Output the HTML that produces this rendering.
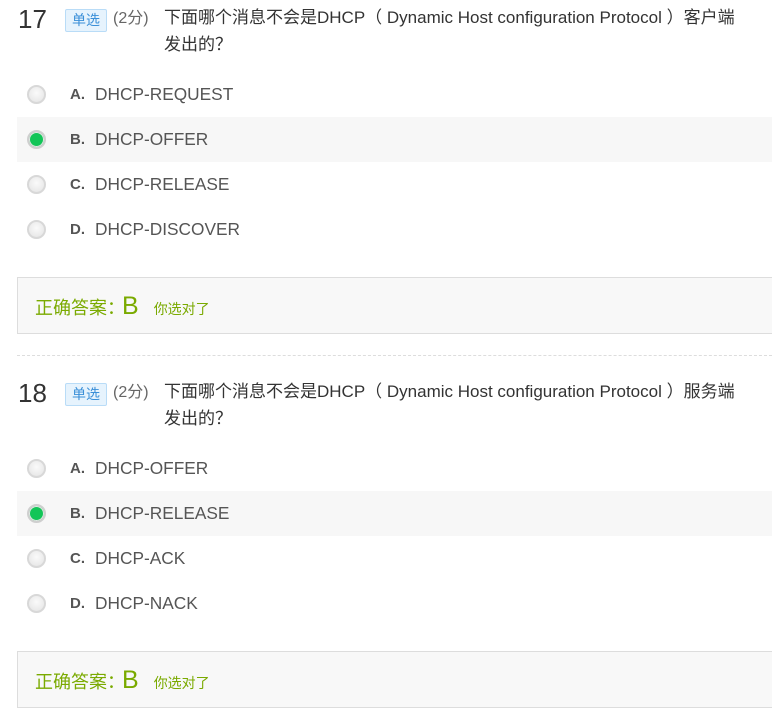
<!DOCTYPE html>
<html><head><meta charset="utf-8"><style>
*{margin:0;padding:0;box-sizing:border-box}
body{width:772px;height:712px;background:#fff;font-family:"Liberation Sans","Noto Sans CJK SC",sans-serif;position:relative;overflow:hidden;color:#333}
.a{position:absolute;white-space:nowrap}
.num{font-size:26px;color:#333;line-height:30px}
.tag{font-size:14px;color:#3a8fd8;background:#e6f3fd;border:1px solid #b9dcf7;border-radius:2px;width:42px;height:23px;line-height:21px;text-align:center}
.sc{font-size:16px;color:#666;line-height:22px}
.q{font-size:17px;color:#333;line-height:27px}
.row{position:absolute;left:17px;width:755px;height:45px}
.row.sel{background:#f7f7f7}
.rd{position:absolute;left:10px;top:13px;width:19px;height:19px;border-radius:50%;border:2px solid #d8d8d8;background:radial-gradient(circle at 50% 40%,#fafafa,#e3e3e3)}
.rd.on{background:#12c557;border-color:#cfcfcf;box-shadow:inset 0 0 0 1px #e8e8e8}
.lb{position:absolute;left:53px;top:0;line-height:45px;font-size:15px;font-weight:bold;color:#555}
.tx{position:absolute;left:78px;top:0;line-height:45px;font-size:17.3px;color:#555}
.ans{position:absolute;left:17px;width:760px;height:57px;background:#f8f8f8;border:1px solid #ddd}
.ans .t{position:absolute;left:17px;top:0;line-height:57px;font-size:18px;color:#7aaa00}
.ans .b{font-size:25px;margin:0 15px 0 -3px}
.ans .s{font-size:14px}
.dash{position:absolute;left:17px;top:355px;width:755px;border-top:1px dashed #ddd}
</style></head><body>
<div class="a num" style="left:18px;top:4px">17</div>
<div class="a tag" style="left:65px;top:9px">单选</div>
<div class="a sc" style="left:113px;top:8px">(2分)</div>
<div class="a q" style="left:164px;top:4px">下面哪个消息不会是DHCP（ Dynamic Host configuration Protocol ）客户端<br>发出的？</div>
<div class="row" style="top:72px"><div class="rd"></div><div class="lb">A.</div><div class="tx">DHCP-REQUEST</div></div>
<div class="row sel" style="top:117px"><div class="rd on"></div><div class="lb">B.</div><div class="tx">DHCP-OFFER</div></div>
<div class="row" style="top:162px"><div class="rd"></div><div class="lb">C.</div><div class="tx">DHCP-RELEASE</div></div>
<div class="row" style="top:207px"><div class="rd"></div><div class="lb">D.</div><div class="tx">DHCP-DISCOVER</div></div>
<div class="ans" style="top:277px"><div class="t">正确答案：<span class="b">B</span><span class="s">你选对了</span></div></div>
<div class="dash"></div>

<div class="a num" style="left:18px;top:378px">18</div>
<div class="a tag" style="left:65px;top:383px">单选</div>
<div class="a sc" style="left:113px;top:382px">(2分)</div>
<div class="a q" style="left:164px;top:378px">下面哪个消息不会是DHCP（ Dynamic Host configuration Protocol ）服务端<br>发出的？</div>
<div class="row" style="top:446px"><div class="rd"></div><div class="lb">A.</div><div class="tx">DHCP-OFFER</div></div>
<div class="row sel" style="top:491px"><div class="rd on"></div><div class="lb">B.</div><div class="tx">DHCP-RELEASE</div></div>
<div class="row" style="top:536px"><div class="rd"></div><div class="lb">C.</div><div class="tx">DHCP-ACK</div></div>
<div class="row" style="top:581px"><div class="rd"></div><div class="lb">D.</div><div class="tx">DHCP-NACK</div></div>
<div class="ans" style="top:651px"><div class="t">正确答案：<span class="b">B</span><span class="s">你选对了</span></div></div>
</body></html>
